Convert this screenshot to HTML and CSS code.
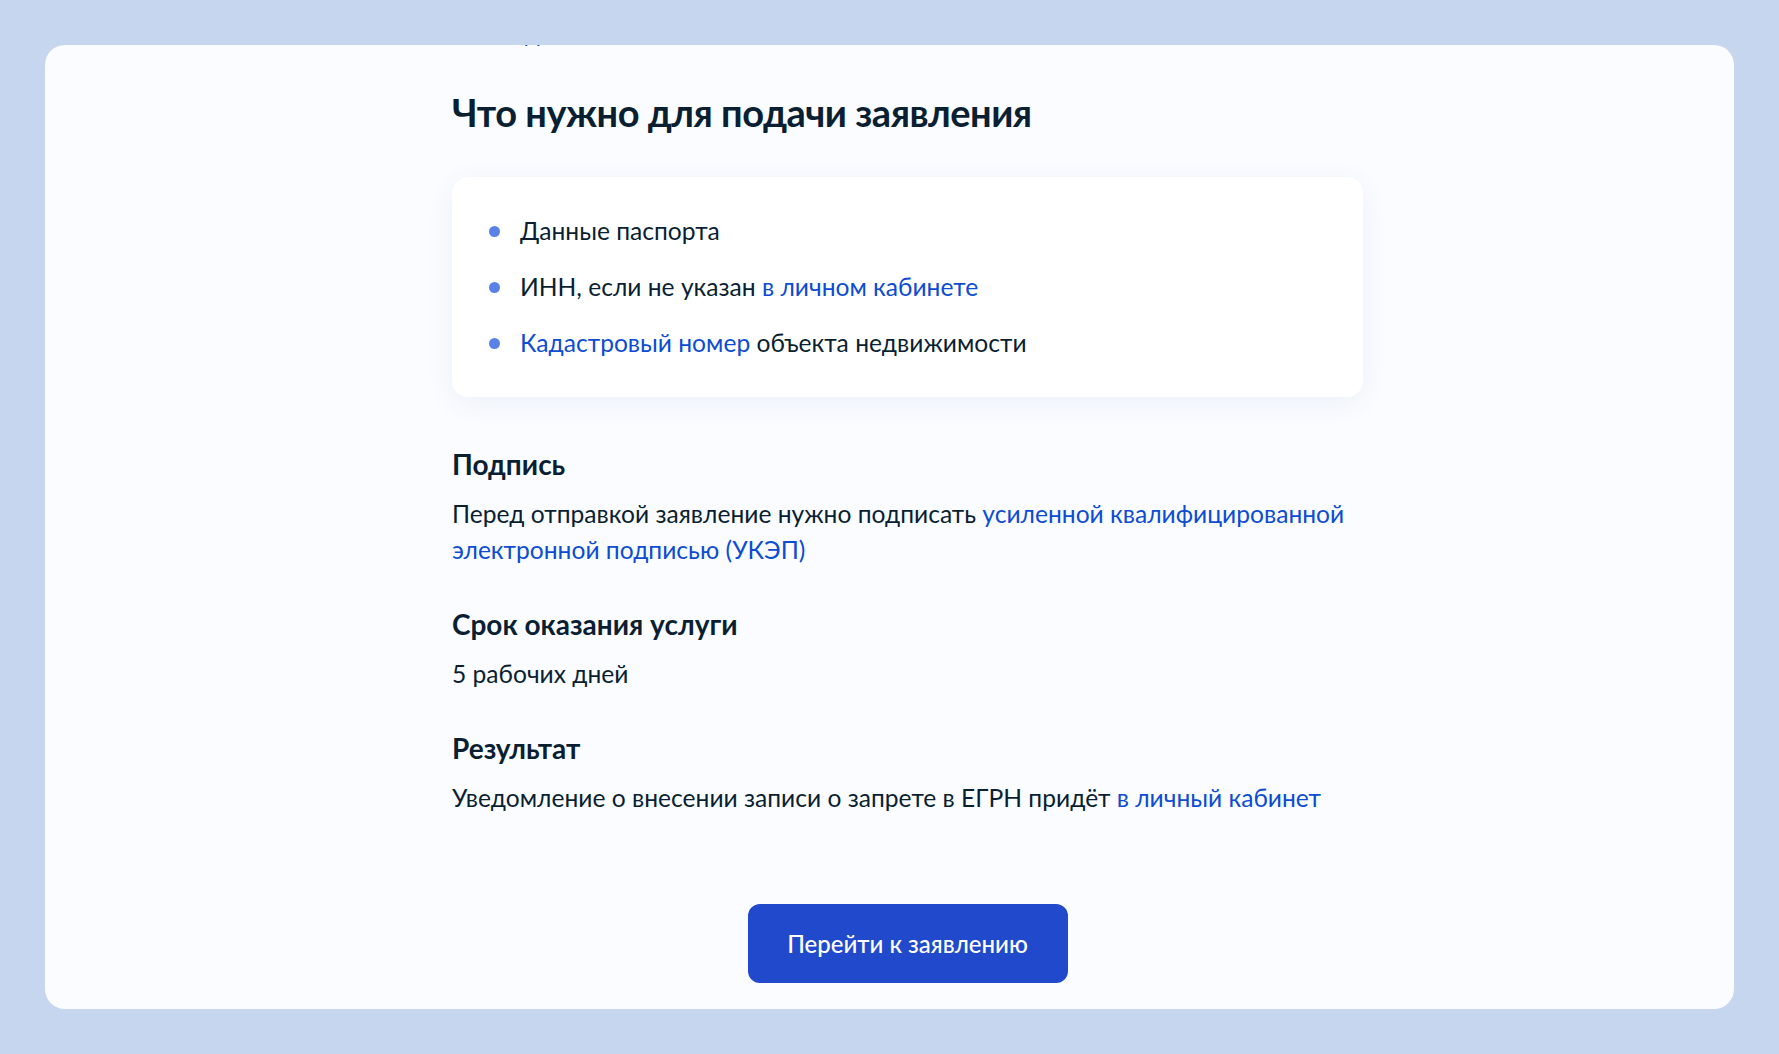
FILE: index.html
```html
<!DOCTYPE html>
<html lang="ru">
<head>
<meta charset="utf-8">
<title>Что нужно для подачи заявления</title>
<link rel="stylesheet" href="styles.css">
</head>
<body>
<div class="page">
  <main class="card">
    <div class="column">
      <div class="clipped">Как подать заявление</div>
      <h2 class="title">Что нужно для подачи заявления</h2>
      <ul class="needs">
        <li><span class="dot"></span><span class="item">Данные паспорта</span></li>
        <li><span class="dot"></span><span class="item">ИНН, если не указан <a href="#">в личном кабинете</a></span></li>
        <li><span class="dot"></span><span class="item"><a href="#">Кадастровый номер</a> объекта недвижимости</span></li>
      </ul>
      <section class="block block-first">
        <h3 class="subtitle">Подпись</h3>
        <p class="text">Перед отправкой заявление нужно подписать <a href="#">усиленной квалифицированной электронной подписью (УКЭП)</a></p>
      </section>
      <section class="block">
        <h3 class="subtitle">Срок оказания услуги</h3>
        <p class="text">5 рабочих дней</p>
      </section>
      <section class="block">
        <h3 class="subtitle">Результат</h3>
        <p class="text">Уведомление о внесении записи о запрете в ЕГРН придёт <a href="#">в личный кабинет</a></p>
      </section>
      <div class="actions">
        <button class="btn" type="button">Перейти к заявлению</button>
      </div>
    </div>
  </main>
</div>
</body>
</html>
```
FILE: styles.css
```css
html, body {
  margin: 0;
  padding: 0;
}
body {
  background: #c6d6ef;
  font-family: Lato, "Noto Sans", sans-serif;
  color: #0b1f33;
}
.page {
  padding: 45px;
  height: 1054px;
  box-sizing: border-box;
}
.card {
  height: 100%;
  background: #fafcff;
  border-radius: 20px;
  overflow: hidden;
  box-sizing: border-box;
}
.column {
  width: 911px;
  margin-left: 407px;
}
a {
  color: #0d4cd3;
  text-decoration: none;
}
.clipped {
  font-size: 24px;
  line-height: 36px;
  margin-top: -30px;
  color: #0d4cd3;
}
.title {
  margin: 37px 0 0;
  font-size: 38px;
  letter-spacing: -0.5px;
  line-height: 48px;
  font-weight: 700;
  color: #0b1f33;
}
.needs {
  list-style: none;
  margin: 41px 0 0;
  padding: 36px 37px;
  background: #ffffff;
  border-radius: 16px;
  box-shadow: 0 6px 28px rgba(60, 90, 150, 0.07);
  display: flex;
  flex-direction: column;
  gap: 20px;
}
.needs li {
  display: flex;
  align-items: center;
  gap: 20px;
  font-size: 24.6px;
  line-height: 36px;
}
.dot {
  width: 11px;
  height: 11px;
  border-radius: 50%;
  background: #5a82e6;
  flex: none;
}
.block {
  margin-top: 38px;
}
.block-first {
  margin-top: 49px;
}
.subtitle {
  margin: 0 0 14px;
  font-size: 28px;
  line-height: 36px;
  font-weight: 700;
}
.text {
  margin: 0;
  font-size: 24.6px;
  line-height: 36px;
}
.actions {
  display: flex;
  justify-content: center;
  margin-top: 88px;
}
.btn {
  width: 320px;
  height: 79px;
  border: none;
  border-radius: 12px;
  background: #2149cc;
  color: #ffffff;
  font-family: Lato, "Noto Sans", sans-serif;
  font-size: 24px;
  font-weight: 500;
  cursor: pointer;
}
```
